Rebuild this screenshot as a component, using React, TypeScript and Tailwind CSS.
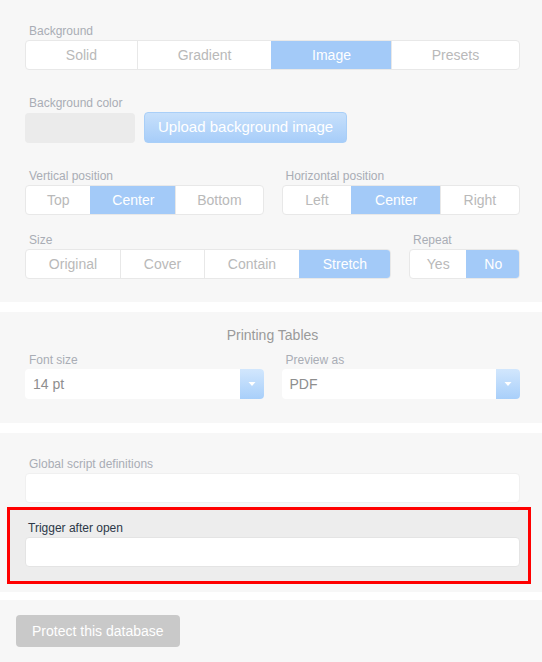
import React from "react";

const font = { fontFamily: '"Liberation Sans", Arial, Helvetica, sans-serif' };

function Label({ children, className = "" }: { children: React.ReactNode; className?: string }) {
  return (
    <div className={`h-[14px] leading-[14px] text-[12px] text-[#a9adb5] pl-[4px] mb-[2px] whitespace-nowrap ${className}`}>
      {children}
    </div>
  );
}

function Segmented({ items, active }: { items: string[]; active: number }) {
  return (
    <div className="flex h-[30px] w-full rounded-[4px] border border-[#e8e8e8] bg-white overflow-hidden">
      {items.map((it, i) => (
        <div
          key={it}
          className={`flex-auto flex items-center justify-center text-[14px] ${
            i > 0 ? "border-l border-[#e8e8e8]" : ""
          } ${i === active ? "bg-[#a3caf8] text-white border-l-[#a3caf8]" : "text-[#b9b9b9]"}`}
        >
          {it}
        </div>
      ))}
    </div>
  );
}

function Select({ value }: { value: string }) {
  return (
    <div className="flex h-[30px] w-full rounded-[4px] bg-white overflow-hidden">
      <div className="flex-1 flex items-center pl-[8px] text-[14px] text-[#8e8e8e]">{value}</div>
      <div className="w-[24px] flex items-center justify-center bg-gradient-to-b from-[#d2e7fd] to-[#a8cffa]">
        <svg width="8" height="6" viewBox="0 0 8 6">
          <path d="M0.5 1 L7.5 1 L4 5 Z" fill="#ffffff" />
        </svg>
      </div>
    </div>
  );
}

export default function App() {
  return (
    <div style={font} className="w-[542px] min-h-[662px] bg-white flex flex-col">
      {/* Panel 1 */}
      <div className="bg-[#f7f7f7] pt-[24px] pb-[23px] pl-[25px] pr-[22px]">
        <Label>Background</Label>
        <Segmented items={["Solid", "Gradient", "Image", "Presets"]} active={2} />

        <Label className="mt-[26px]">Background color</Label>
        <div className="flex items-end gap-[9px] h-[31px]">
          <div className="w-[110px] h-[30px] rounded-[4px] bg-[#ebebeb]" />
          <div className="h-[31px] px-[13px] flex items-center rounded-[4px] border border-[#a9cff8] bg-gradient-to-b from-[#c7e0fb] to-[#a7cdf9] text-white text-[15px]">
            Upload background image
          </div>
        </div>

        <div className="flex gap-[18px] mt-[26px]">
          <div className="flex-1">
            <Label>Vertical position</Label>
            <Segmented items={["Top", "Center", "Bottom"]} active={1} />
          </div>
          <div className="flex-1">
            <Label>Horizontal position</Label>
            <Segmented items={["Left", "Center", "Right"]} active={1} />
          </div>
        </div>

        <div className="flex gap-[18px] mt-[18px]">
          <div className="w-[366px]">
            <Label>Size</Label>
            <Segmented items={["Original", "Cover", "Contain", "Stretch"]} active={3} />
          </div>
          <div className="flex-1">
            <Label>Repeat</Label>
            <Segmented items={["Yes", "No"]} active={1} />
          </div>
        </div>
      </div>

      {/* Panel 2 */}
      <div className="bg-[#f7f7f7] mt-[10px] pt-[15px] pb-[24px] pl-[25px] pr-[22px]">
        <div className="text-center text-[14px] leading-[16px] text-[#9a9a9a] mb-[10px]">Printing Tables</div>
        <div className="flex gap-[18px]">
          <div className="flex-1">
            <Label>Font size</Label>
            <Select value="14 pt" />
          </div>
          <div className="flex-1">
            <Label>Preview as</Label>
            <Select value="PDF" />
          </div>
        </div>
      </div>

      {/* Panel 3 */}
      <div className="bg-[#f7f7f7] mt-[10px] pt-[24px] pb-[8px] pl-[25px] pr-[22px]">
        <Label>Global script definitions</Label>
        <div className="h-[30px] rounded-[4px] bg-white border border-[#f0f0f0]" />
        <div className="mt-[4px] ml-[-18px] mr-[-11px] border-[3px] border-[#ff0000] bg-[#ededed] pt-[11px] pb-[14px] pl-[15px] pr-[8px]">
          <div className="h-[14px] leading-[14px] text-[12px] text-[#2c3848] pl-[3px] mb-[2px]">Trigger after open</div>
          <div className="h-[30px] rounded-[4px] bg-white border border-[#e4e4e4]" />
        </div>
      </div>

      {/* Panel 4 */}
      <div className="bg-[#f7f7f7] mt-[8px] flex-1 pt-[15px] pb-[15px] pl-[16px]">
        <div className="inline-flex h-[32px] items-center px-[16px] rounded-[4px] bg-[#c9c9c9] text-white text-[14px]">
          Protect this database
        </div>
      </div>
    </div>
  );
}
